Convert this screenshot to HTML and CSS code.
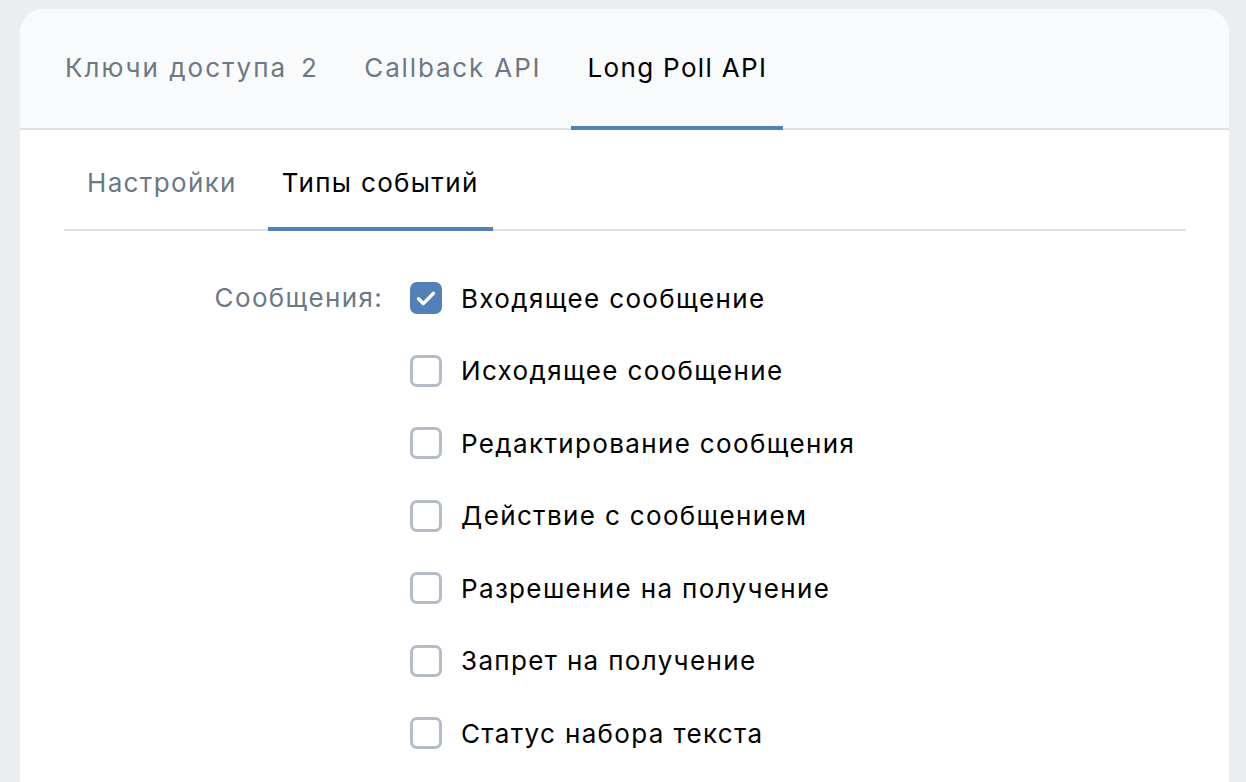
FILE: index.html
```html
<!DOCTYPE html>
<html lang="ru">
<head>
<meta charset="utf-8">
<title>Long Poll API</title>
<link rel="stylesheet" href="styles.css">
</head>
<body>
<div class="card">
  <div class="header">
    <div class="tab"><span class="keys">Ключи доступа</span><span class="count">2</span></div>
    <div class="tab latin">Callback API</div>
    <div class="tab active">Long Poll API</div>
  </div>
  <div class="content">
    <div class="subtabs">
      <div class="subtab">Настройки</div>
      <div class="subtab active">Типы событий</div>
    </div>
    <div class="form">
      <div class="label">Сообщения:</div>
      <div class="options">
        <label class="option"><span class="box checked"><svg viewBox="0 0 32 32" width="32" height="32"><path d="M8.5 16.8l4.8 4.8 10.2-10.4" fill="none" stroke="#fff" stroke-width="3.4" stroke-linecap="round" stroke-linejoin="round"/></svg></span>Входящее сообщение</label>
        <label class="option"><span class="box"></span>Исходящее сообщение</label>
        <label class="option"><span class="box"></span>Редактирование сообщения</label>
        <label class="option"><span class="box"></span>Действие с сообщением</label>
        <label class="option"><span class="box"></span>Разрешение на получение</label>
        <label class="option"><span class="box"></span>Запрет на получение</label>
        <label class="option"><span class="box"></span>Статус набора текста</label>
      </div>
    </div>
  </div>
</div>
</body>
</html>
```
FILE: styles.css
```css
html, body {
  margin: 0;
  padding: 0;
  background: #ebedf0;
  font-family: Inter, "Noto Sans", sans-serif;
  font-size: 26px;
  letter-spacing: 1.35px;
  color: #000;
}
body {
  padding: 9px 17px 0 20px;
  height: 782px;
  box-sizing: border-box;
  overflow: hidden;
}
.card {
  background: #fff;
  border-radius: 24px 24px 0 0;
  height: 800px;
  overflow: hidden;
}
.header {
  background: #f9fafb;
  height: 121px;
  box-sizing: border-box;
  border-bottom: 2px solid #dce1e6;
  display: flex;
  padding-left: 29px;
  gap: 14px;
}
.tab {
  height: 121px;
  margin-bottom: -2px;
  box-sizing: border-box;
  border-bottom: 4px solid transparent;
  padding: 0 16px;
  display: flex;
  align-items: center;
  color: #6d7885;
  white-space: nowrap;
}
.tab .keys {
  letter-spacing: 2px;
}
.tab.latin {
  letter-spacing: 1.85px;
}
.tab.active {
  color: #000;
  border-bottom-color: #5181b8;
}
.count {
  margin-left: 14px;
}
.content {
  padding: 0 43px 0 44px;
}
.subtabs {
  height: 101px;
  box-sizing: border-box;
  border-bottom: 2px solid #dce1e6;
  display: flex;
  padding-left: 9px;
  gap: 17px;
}
.subtab {
  height: 101px;
  margin-bottom: -2px;
  box-sizing: border-box;
  padding: 8px 14px 0;
  border-bottom: 4px solid transparent;
  display: flex;
  align-items: center;
  color: #6d7885;
  white-space: nowrap;
}
.subtab.active {
  color: #000;
  border-bottom-color: #5181b8;
}
.form {
  display: grid;
  grid-template-columns: 319px 1fr;
  column-gap: 27px;
  padding-top: 51px;
}
.label {
  text-align: right;
  color: #6d7885;
  height: 32px;
  line-height: 32px;
}
.options {
  display: flex;
  flex-direction: column;
  gap: 40.5px;
}
.option {
  display: flex;
  align-items: center;
  gap: 19px;
  height: 32px;
  white-space: nowrap;
}
.box {
  width: 32px;
  height: 32px;
  box-sizing: border-box;
  border: 3px solid #b3bcc7;
  border-radius: 7px;
  flex: none;
}
.box.checked {
  background: #5181b8;
  border: none;
}
.box svg {
  display: block;
}
```
